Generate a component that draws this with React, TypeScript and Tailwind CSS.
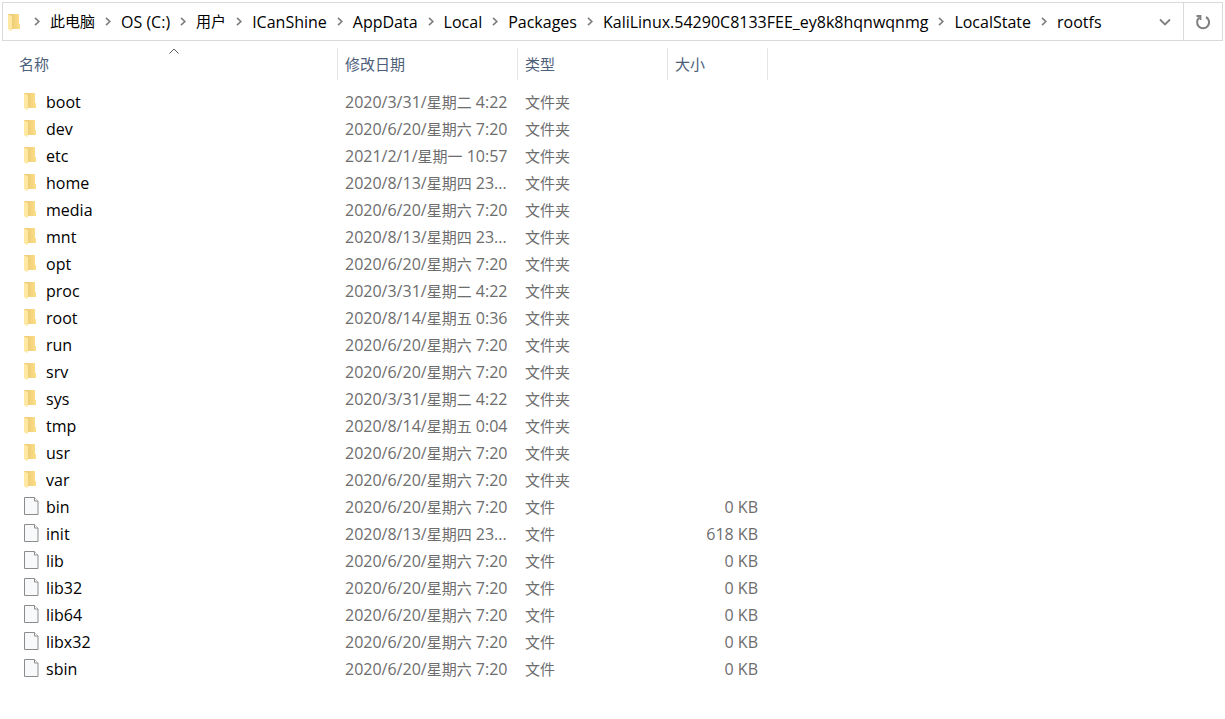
import { useState } from "react";

type Entry = {
  name: string;
  date: string;
  day: string;
  time: string;
  size?: string;
};

const path = [
  "此电脑",
  "OS (C:)",
  "用户",
  "ICanShine",
  "AppData",
  "Local",
  "Packages",
  "KaliLinux.54290C8133FEE_ey8k8hqnwqnmg",
  "LocalState",
  "rootfs",
];

const entries: Entry[] = [
  { name: "boot", date: "2020/3/31/", day: "星期二", time: "4:22" },
  { name: "dev", date: "2020/6/20/", day: "星期六", time: "7:20" },
  { name: "etc", date: "2021/2/1/", day: "星期一", time: "10:57" },
  { name: "home", date: "2020/8/13/", day: "星期四", time: "23..." },
  { name: "media", date: "2020/6/20/", day: "星期六", time: "7:20" },
  { name: "mnt", date: "2020/8/13/", day: "星期四", time: "23..." },
  { name: "opt", date: "2020/6/20/", day: "星期六", time: "7:20" },
  { name: "proc", date: "2020/3/31/", day: "星期二", time: "4:22" },
  { name: "root", date: "2020/8/14/", day: "星期五", time: "0:36" },
  { name: "run", date: "2020/6/20/", day: "星期六", time: "7:20" },
  { name: "srv", date: "2020/6/20/", day: "星期六", time: "7:20" },
  { name: "sys", date: "2020/3/31/", day: "星期二", time: "4:22" },
  { name: "tmp", date: "2020/8/14/", day: "星期五", time: "0:04" },
  { name: "usr", date: "2020/6/20/", day: "星期六", time: "7:20" },
  { name: "var", date: "2020/6/20/", day: "星期六", time: "7:20" },
  { name: "bin", date: "2020/6/20/", day: "星期六", time: "7:20", size: "0 KB" },
  { name: "init", date: "2020/8/13/", day: "星期四", time: "23...", size: "618 KB" },
  { name: "lib", date: "2020/6/20/", day: "星期六", time: "7:20", size: "0 KB" },
  { name: "lib32", date: "2020/6/20/", day: "星期六", time: "7:20", size: "0 KB" },
  { name: "lib64", date: "2020/6/20/", day: "星期六", time: "7:20", size: "0 KB" },
  { name: "libx32", date: "2020/6/20/", day: "星期六", time: "7:20", size: "0 KB" },
  { name: "sbin", date: "2020/6/20/", day: "星期六", time: "7:20", size: "0 KB" },
];

const FolderIcon = () => (
  <svg className="h-[18px] w-3 shrink-0" viewBox="0 -1 12 18" aria-hidden="true">
    <defs>
      <linearGradient id="folderBack" x1="0" x2="1">
        <stop offset="0.3" stopColor="#efcd78" />
        <stop offset="1" stopColor="#fcdf88" />
      </linearGradient>
    </defs>
    <path d="M0 0H11V10H12V15H3L0 14Z" fill="url(#folderBack)" />
    <path d="M0 0.5L4 2V16L3 17L0 15Z" fill="#ffe8a2" />
  </svg>
);

const FileIcon = () => (
  <svg className="h-[18px] w-[15px] shrink-0" viewBox="0 0 15 18" aria-hidden="true">
    <path d="M0.5 0.5H10.5L14 4V17.5H0.5Z" fill="#f8f9fa" stroke="#8c8c8c" />
    <path d="M10.5 0.5V4H14" fill="#fff" stroke="#8c8c8c" />
  </svg>
);

const Separator = () => (
  <svg className="h-[9px] w-[26px] shrink-0" viewBox="0 0 26 9" aria-hidden="true">
    <path d="M11 0.8L14.8 4.5L11 8.2" fill="none" stroke="#808080" strokeWidth="1.7" />
  </svg>
);

const App = () => {
  const [asc, setAsc] = useState(true);
  const rows = asc ? entries : [...entries].reverse();

  return (
    <main className="min-h-screen bg-white p-0.5 font-['Open_Sans','Noto_Sans_CJK_SC',sans-serif] text-base text-black">
      <nav
        aria-label="地址"
        className="flex h-[39px] items-center border border-[#d9d9d9]"
      >
        <div className="flex min-w-0 flex-1 items-center overflow-hidden pl-[5px]">
          <FolderIcon />
          <ol className="flex items-center pl-1">
            {path.map((part) => (
              <li key={part} className="flex items-center whitespace-nowrap">
                <Separator />
                <a
                  href="#"
                  className={/[a-z]/i.test(part) ? "text-base" : "text-[15px]"}
                >
                  {part}
                </a>
              </li>
            ))}
          </ol>
        </div>
        <button
          type="button"
          aria-label="以前的位置"
          className="flex h-full w-9 items-center justify-center"
        >
          <svg className="h-2 w-3" viewBox="0 0 12 8" aria-hidden="true">
            <path d="M1 1.5L6 6.5L11 1.5" fill="none" stroke="#808080" strokeWidth="1.8" />
          </svg>
        </button>
        <button
          type="button"
          aria-label="刷新"
          className="flex h-full w-[39px] items-center justify-center border-l border-[#d9d9d9]"
        >
          <svg className="h-4 w-4" viewBox="0 0 16 16" aria-hidden="true">
            <path
              d="M11 3A6 6 0 1 1 4.6 3.4"
              fill="none"
              stroke="#808080"
              strokeWidth="2"
            />
            <path d="M1.5 2H5.5V6" fill="none" stroke="#808080" strokeWidth="1.8" />
          </svg>
        </button>
      </nav>

      <table className="mt-[7px] w-full table-fixed border-separate border-spacing-0 text-left">
        <colgroup>
          <col className="w-[336px]" />
          <col className="w-[180px]" />
          <col className="w-[150px]" />
          <col className="w-[100px]" />
          <col />
        </colgroup>
        <thead className="text-[15px] text-[#4c607a]">
          <tr className="h-8">
            <th
              className="relative border-r border-[#e5e5e5] p-0 font-normal"
              aria-sort={asc ? "ascending" : "descending"}
            >
              <button
                type="button"
                className="block w-full pl-[17px] text-left"
                onClick={() => setAsc(!asc)}
              >
                名称
              </button>
              <svg
                className={`absolute top-0 left-[167px] h-1.5 w-2.5 ${asc ? "" : "rotate-180"}`}
                viewBox="0 0 10 6"
                aria-hidden="true"
              >
                <path d="M0.5 5.5L5 1L9.5 5.5" fill="none" stroke="#5a5a5a" />
              </svg>
            </th>
            <th className="border-r border-[#e5e5e5] p-0 pl-[7px] font-normal">修改日期</th>
            <th className="border-r border-[#e5e5e5] p-0 pl-[7px] font-normal">类型</th>
            <th className="border-r border-[#e5e5e5] p-0 pl-[7px] font-normal">大小</th>
            <td />
          </tr>
        </thead>
        <tbody className="text-[#6d6d6d] before:block before:h-2">
          {rows.map((entry) => (
            <tr key={entry.name} className="h-[27px] leading-6">
              <td className="p-0 pl-[22px] text-black">
                <div className="flex items-center">
                  <span className="flex w-[22px] shrink-0 pb-0.5">
                    {entry.size ? <FileIcon /> : <FolderIcon />}
                  </span>
                  {entry.name}
                </div>
              </td>
              <td className="p-0 pl-[7px] whitespace-nowrap">
                {entry.date}
                <span className="text-[15px]">{entry.day}</span> {entry.time}
              </td>
              <td className="p-0 pl-[7px] text-[15px]">{entry.size ? "文件" : "文件夹"}</td>
              <td className="p-0 pr-2.5 text-right">{entry.size}</td>
              <td />
            </tr>
          ))}
        </tbody>
      </table>
    </main>
  );
};

export default App;
